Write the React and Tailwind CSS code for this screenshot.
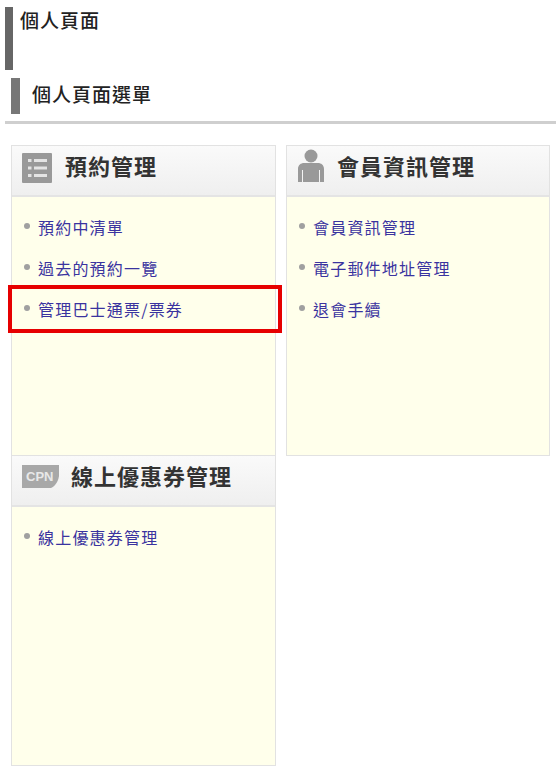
const ListIcon = () => (
  <svg width="30" height="30" viewBox="0 0 30 30" className="shrink-0">
    <rect width="30" height="30" rx="1" fill="#999" />
    <g fill="#e4e4e4">
      <rect x="6" y="6" width="3.5" height="3" />
      <rect x="12" y="6" width="13" height="3" />
      <rect x="6" y="13.5" width="3.5" height="3" />
      <rect x="12" y="13.5" width="13" height="3" />
      <rect x="6" y="21" width="3.5" height="3" />
      <rect x="12" y="21" width="13" height="3" />
    </g>
  </svg>
);

const PersonIcon = () => (
  <svg width="28" height="34" viewBox="0 0 28 34" className="-mt-[3px] shrink-0">
    <circle cx="14" cy="7" r="6.5" fill="#999" />
    <path
      d="M1 33V20c0-4 3-6 6-6h14c3 0 6 2 6 6v13h-4V21h-1v12H6V21H5v12z"
      fill="#999"
    />
  </svg>
);

const CouponIcon = () => (
  <svg width="37" height="23" viewBox="0 0 37 23" className="-mt-[3px] shrink-0">
    <path d="M0 0h37v11c-1 6-4 10-8 12H0z" fill="#a8a8a8" />
    <text
      x="4"
      y="16"
      fill="#e8e8e8"
      fontSize="13"
      fontWeight="700"
      fontFamily="'Liberation Sans', sans-serif"
    >
      CPN
    </text>
  </svg>
);

const Card = ({ icon, title, items, gap, top }) => (
  <div className={`h-[311px] border border-[#e2e2e2] bg-[#ffffeb] ${top}`}>
    <div
      className={`flex h-[51px] items-center border-b-2 border-[#e4e4e4] bg-gradient-to-b from-[#fafafa] to-[#efefef] pb-[6px] pl-[10px] ${gap}`}
    >
      {icon}
      <h3 className="pb-[4px] text-[22px] font-bold tracking-[1px] text-[#333]">
        {title}
      </h3>
    </div>
    <ul className="flex flex-col gap-[17px] pt-[18px]">
      {items.map((item) => (
        <li key={item} className="flex h-[24px] items-center pl-[12px]">
          <span className="-mt-[2px] mr-[8px] h-[6px] w-[6px] rounded-full bg-[#a0a0a0]" />
          <a className="text-[16px] tracking-[1.2px] text-[#3a339f]">{item}</a>
        </li>
      ))}
    </ul>
  </div>
);

export default function App() {
  return (
    <div className="relative h-[780px] w-[556px] overflow-hidden bg-white font-['Noto_Sans_CJK_TC','Noto_Sans',sans-serif]">
      <div className="pl-[5px] pt-[7px]">
        <h1 className="h-[63px] border-l-[8px] border-[#666] pl-[7px] text-[19px] leading-[26px] font-medium tracking-[1px] text-[#222]">
          個人頁面
        </h1>
      </div>
      <div className="pl-[11px] pt-[8px]">
        <h2 className="flex h-[36px] items-center border-l-[9px] border-[#777] pb-[4px] pl-[12px] text-[19px] font-medium tracking-[1px] text-[#222]">
          個人頁面選單
        </h2>
      </div>
      <div className="ml-[5px] mt-[7px] h-[3px] bg-[#cfcfcf]" />
      <div className="grid grid-cols-[265px_264px] gap-x-[10px] pl-[11px] pt-[21px]">
        <Card
          icon={<ListIcon />}
          title="預約管理"
          gap="gap-[13px]"
          items={["預約中清單", "過去的預約一覽", "管理巴士通票/票券"]}
        />
        <Card
          icon={<PersonIcon />}
          title="會員資訊管理"
          gap="gap-[12px]"
          items={["會員資訊管理", "電子郵件地址管理", "退會手續"]}
        />
        <Card
          icon={<CouponIcon />}
          title="線上優惠券管理"
          gap="gap-[12px]"
          items={["線上優惠券管理"]}
          top="-mt-px"
        />
      </div>
      <div className="absolute left-[8px] top-[285px] h-[48px] w-[274px] border-4 border-[#e60000]" />
    </div>
  );
}
